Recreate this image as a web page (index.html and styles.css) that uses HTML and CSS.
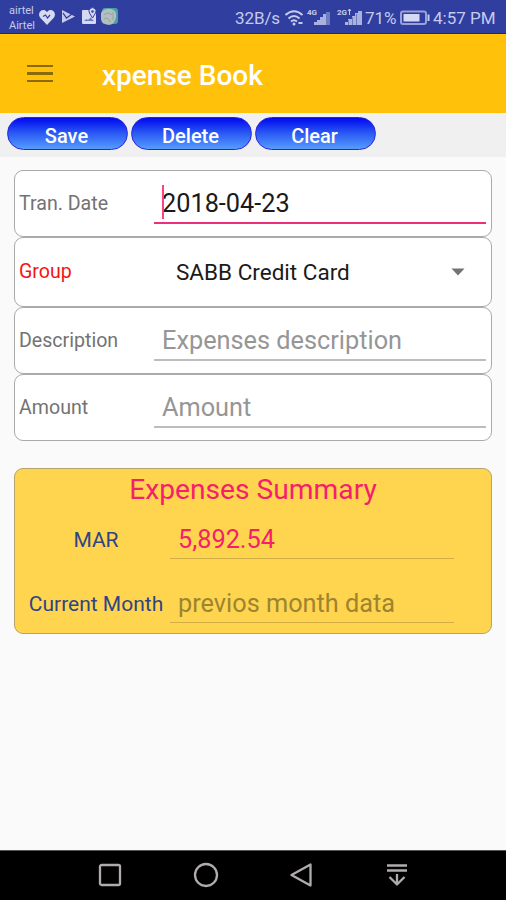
FILE: index.html
```html
<!DOCTYPE html>
<html lang="en">
<head>
    <meta charset="UTF-8">
    <meta name="viewport" content="width=device-width, initial-scale=1.0">
    <title>xpense Book</title>
    <link rel="stylesheet" href="styles.css">
</head>
<body>
    <div class="status-bar">
        <div class="carrier">
            <span>airtel</span>
            <span>Airtel</span>
        </div>
        <svg class="notify-icons" width="82" height="20" viewBox="0 0 82 20">
            <!-- health -->
            <path d="M9 18 L2 10.5 C-1.500 5 5.500 0 9 5 C12.500 0 19.500 5 16 10.500 Z" fill="#d5d9f2"/>
            <path d="M5 9.500 L7.500 8 L9.500 11 L12 8" fill="none" stroke="#303f9f" stroke-width="1.200"/>
            <!-- play -->
            <path d="M24 3 L37 9.500 L24 16 Z" fill="#c5cbed"/>
            <path d="M25 6 L28.500 11 L34 7" fill="none" stroke="#303f9f" stroke-width="1.300"/>
            <!-- map -->
            <rect x="44" y="3" width="14" height="14" rx="1" fill="#d5d9f2"/>
            <path d="M46 14 H56 L52.500 10.500 L50 13 L48.500 12 Z" fill="#6f7bc0"/>
            <path d="M54.500 11 L51.500 6 A3.500 3.500 0 1 1 57.500 6 Z" fill="#d5d9f2" stroke="#303f9f"/>
            <circle cx="54.500" cy="4.500" r="1.200" fill="#303f9f"/>
            <!-- app -->
            <rect x="64" y="1" width="16" height="16" rx="3" fill="#4a9fa0"/>
            <path d="M63 6 Q66 1 73 2 Q79 3 78 10 Q77 17 71 18 Q63 17 63 12 Z" fill="#b3bfbf"/>
            <path d="M66 8 Q70 4 74 8 M66 12 Q70 9 72 15 M75 5 V13" fill="none" stroke="#8fa5a8"/>
        </svg>
        <div class="status-right">
            <span class="speed">32B/s</span>
            <svg class="signal-icons" width="80" height="20" viewBox="0 0 80 20">
                <g fill="none" stroke="#c5cbed" stroke-width="2">
                    <path d="M0.500 7 Q9 -0.500 17.500 7"/>
                    <path d="M3.500 10.500 Q9 5.500 14.500 10.500"/>
                    <path d="M6 13.500 Q9 11 12 13.500"/>
                </g>
                <circle cx="9" cy="16" r="1.500" fill="#c5cbed"/>
                <path d="M13.500 15 H17.500" stroke="#c5cbed" stroke-width="2"/>
                <text x="22" y="7" class="net-label">4G</text>
                <path d="M29 17 V14 H32 V12 H35 V9 H38 V6 H41 V17 Z" fill="#a9b1de"/>
                <path d="M41 17 V4 H45 V17 Z" fill="#6f7bc0"/>
                <text x="52" y="7" class="net-label">2G</text>
                <path d="M64.500 1 V7 M63 3 L64.500 1 L66 3" fill="none" stroke="#c5cbed"/>
                <path d="M60 17 V14 H63 V11 H67 V8 H70 V5 H73 V3 H77 V17 Z" fill="#a9b1de"/>
                <path d="M63.500 17 V12 M67.500 17 V9 M71.500 17 V6" stroke="#6f7bc0"/>
            </svg>
            <span class="percent">71%</span>
            <svg class="battery" width="31" height="16" viewBox="0 0 31 16">
                <rect x="1" y="1.500" width="25" height="12.500" rx="2" fill="none" stroke="#98a2d8" stroke-width="2"/>
                <rect x="3.500" y="4" width="16" height="7.500" fill="#d5d9f2"/>
                <path d="M28.500 4.500 V11" stroke="#c5cbed" stroke-width="2"/>
            </svg>
            <span class="clock">4:57 PM</span>
        </div>
    </div>

    <div class="app-bar">
        <div class="menu-icon">
            <span></span>
            <span></span>
            <span></span>
        </div>
        <h1>xpense Book</h1>
    </div>

    <div class="toolbar">
        <button>Save</button>
        <button>Delete</button>
        <button>Clear</button>
    </div>

    <div class="form">
        <div class="row">
            <label for="tran-date">Tran. Date</label>
            <div class="field active">
                <span class="cursor"></span>
                <input type="text" id="tran-date" value="2018-04-23">
            </div>
        </div>
        <div class="row row-group">
            <label>Group</label>
            <div class="dropdown">
                <span>SABB Credit Card</span>
                <svg width="14" height="8" viewBox="0 0 14 8"><path d="M0.500 0.500 H13.500 L7 7.500 Z" fill="#737373"/></svg>
            </div>
        </div>
        <div class="row">
            <label for="description">Description</label>
            <div class="field">
                <input type="text" id="description" placeholder="Expenses description">
            </div>
        </div>
        <div class="row">
            <label for="amount">Amount</label>
            <div class="field">
                <input type="text" id="amount" placeholder="Amount">
            </div>
        </div>
    </div>

    <div class="summary">
        <h2>Expenses Summary</h2>
        <div class="summary-row">
            <label for="last-month">MAR</label>
            <input type="text" id="last-month" value="5,892.54">
        </div>
        <div class="summary-row">
            <label for="current-month">Current Month</label>
            <input type="text" id="current-month" placeholder="previos month data">
        </div>
    </div>

    <div class="nav-bar">
        <svg width="26" height="26" viewBox="0 0 26 26"><rect x="3" y="3" width="20" height="20" rx="1.500"/></svg>
        <svg width="26" height="26" viewBox="0 0 26 26"><circle cx="13" cy="13" r="11"/></svg>
        <svg width="26" height="26" viewBox="0 0 26 26"><path d="M22.500 2.500 V23.500 L3.500 13 Z"/></svg>
        <svg width="26" height="26" viewBox="0 0 26 26"><path d="M3 3.500 H23 M3 8.500 H23 M13 12 V22 M5.500 15 L13 22.500 L20.500 15"/></svg>
    </div>
</body>
</html>
```
FILE: styles.css
```css
* {
    box-sizing: border-box;
}

body {
    margin: 0;
    height: 900px;
    display: flex;
    flex-direction: column;
    font-family: Roboto, sans-serif;
    background-color: #fafafa;
    overflow: hidden;
}

/* Status bar */
.status-bar {
    height: 34px;
    flex-shrink: 0;
    display: flex;
    align-items: center;
    padding: 0 10px 0 9px;
    background-color: #303f9f;
    border-bottom: 1px solid #152a88;
    color: #c5cbed;
}

.carrier {
    width: 28px;
    font-size: 11px;
    line-height: 15px;
    padding-top: 3px;
}

.carrier span {
    display: block;
}

.notify-icons {
    margin: 1px 0 0 1px;
}

.status-right {
    margin-left: auto;
    display: flex;
    align-items: center;
    font-size: 17px;
    padding-top: 2px;
    white-space: nowrap;
}

.speed {
    width: 50px;
    letter-spacing: -0.1px;
}

.net-label {
    font-size: 8px;
    font-weight: bold;
    fill: #c5cbed;
}

.percent {
    width: 35px;
}

.battery {
    margin-right: 2px;
}

.clock {
    width: 63px;
}

/* Header */
.app-bar {
    height: 79px;
    flex-shrink: 0;
    display: flex;
    align-items: center;
    padding: 3px 0 0 27px;
    background-color: #ffc10a;
}

.menu-icon {
    width: 26px;
    margin: 0 49px 3px 0;
    display: flex;
    flex-direction: column;
    gap: 5px;
}

.menu-icon span {
    height: 2.5px;
    background-color: #8d6a08;
}

h1 {
    margin: 0;
    font-size: 28px;
    font-weight: 500;
    color: #ffffff;
}

.toolbar {
    height: 44px;
    flex-shrink: 0;
    display: flex;
    gap: 3px;
    padding: 4px 7px;
    background-color: #f0f0f0;
}

button {
    width: 121px;
    height: 33px;
    padding: 4px 2px 0 0;
    font-family: inherit;
    font-size: 20px;
    font-weight: 500;
    color: #ffffff;
    background: linear-gradient(#0008ee, #2b5bf5 50%, #559dfb);
    border: 1.5px solid #2a22dd;
    border-radius: 17px;
}

/* Form */
.form {
    margin: 13px 14px 0;
}

.row {
    height: 67px;
    display: flex;
    align-items: center;
    padding: 0 5px 0 4px;
    background-color: #ffffff;
    border: 1px solid #aaaaaa;
    border-radius: 9px;
}

.row-group {
    height: 70px;
}

.row label {
    width: 135px;
    padding-bottom: 1px;
    font-size: 19.6px;
    color: #737373;
}

.row-group label {
    color: #f51414;
}

input {
    width: 100%;
    padding: 0;
    font-family: inherit;
    font-size: 25.3px;
    color: #1a1a1a;
    background: none;
    border: none;
    outline: none;
}

input::placeholder {
    color: #969696;
}

.field {
    position: relative;
    flex: 1;
    height: 41px;
    padding: 3px 0 0 8px;
    border-bottom: 2px solid #bdbdbd;
}

.field.active {
    border-bottom-color: #ec2f7b;
}

.field input {
    height: 34px;
}

.cursor {
    position: absolute;
    left: 8px;
    top: 2px;
    width: 2px;
    height: 34px;
    background-color: #ff4081;
}

.dropdown {
    flex: 1;
    display: flex;
    align-items: center;
    justify-content: space-between;
    padding: 0 21px 0 22px;
    font-size: 22.5px;
    color: #1a1a1a;
}

/* Summary */
.summary {
    height: 166px;
    flex-shrink: 0;
    margin: 27px 14px 0;
    background-color: #ffd54f;
    border: 1px solid #b5a46b;
    border-radius: 9px;
}

h2 {
    margin: 3px 0 7px;
    height: 35px;
    line-height: 35px;
    font-size: 28.2px;
    font-weight: 400;
    text-align: center;
    color: #f5206c;
}

.summary-row {
    height: 52px;
    display: flex;
    align-items: center;
    padding: 0 37px 0 8px;
}

.summary-row + .summary-row {
    margin-top: 12px;
}

.summary-row label {
    width: 147px;
    padding: 0 1px 0 0;
    font-size: 21px;
    text-align: center;
    white-space: nowrap;
    color: #2f4485;
}

.summary-row input {
    flex: 1;
    min-width: 0;
    height: 38px;
    padding-left: 8px;
    border-bottom: 1px solid #d1af43;
    color: #f5206c;
}

.summary-row input::placeholder {
    color: #9d8430;
}

/* Navigation bar */
.nav-bar {
    height: 50px;
    flex-shrink: 0;
    margin-top: auto;
    display: flex;
    align-items: center;
    gap: 69.5px;
    padding: 0 0 2px 97px;
    background-color: #000000;
    border-top: 1px solid #555555;
}

.nav-bar svg {
    fill: none;
    stroke: #b0acac;
    stroke-width: 2.3;
    stroke-linejoin: round;
}
```
